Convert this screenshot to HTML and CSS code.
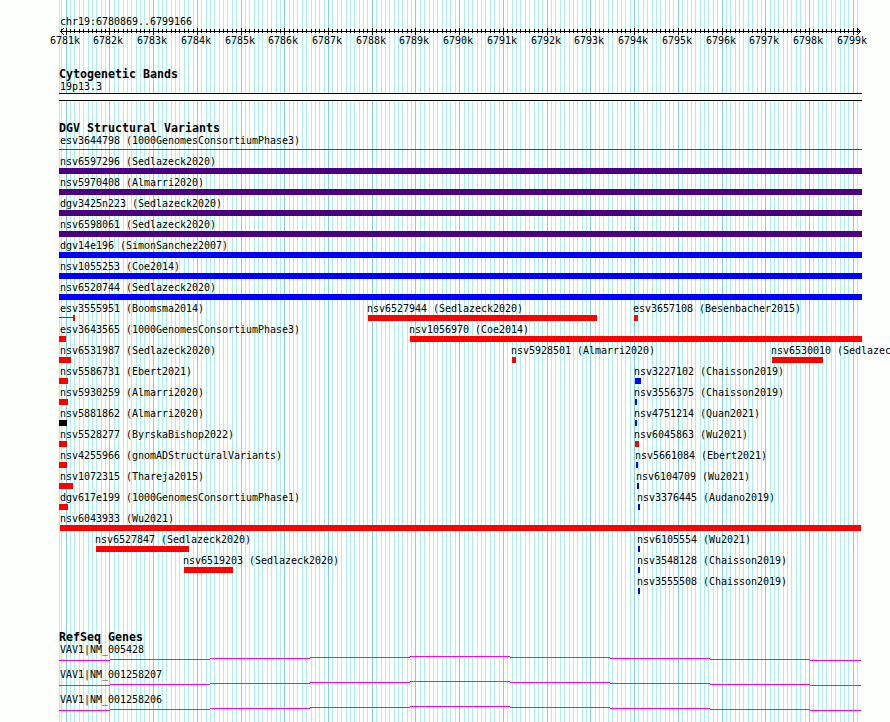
FILE: index.html
```
<!DOCTYPE html>
<html lang="en">
  <head>
    <meta charset="UTF-8" />
    <meta name="viewport" content="width=device-width, initial-scale=1.0" />
    <title>chr19:6780869..6799166</title>
    <link rel="stylesheet" href="styles.css">
  </head>
  <body>
    <div id="browser">
      <svg id="gridlines" width="890" height="722" shape-rendering="crispEdges"></svg>

      <div id="tracks">
        <div class="ruler">
          <div class="label">chr19:6780869..6799166</div>
          <svg id="scale" width="804" height="7"></svg>
          <div id="scale-labels"></div>
        </div>

        <div class="track cytoband">
          <h2>Cytogenetic Bands</h2>
          <div class="label">19p13.3</div>
          <div class="band"></div>
        </div>

        <div class="track">
          <h2>DGV Structural Variants</h2>
          <div id="variants"></div>
        </div>

        <div class="track genes">
          <h2>RefSeq Genes</h2>
          <div id="genes"></div>
        </div>
      </div>
    </div>
    <script src="script.js"></script>
  </body>
</html>
```

FILE: styles.css
```
body
{
  margin: 0;
  background-color: #fdfffc;
  color: #000;
  font-family: "DejaVu Sans Mono", monospace;
  font-size: 10px;
}
#browser
{
  position: relative;
  width: 890px;
  height: 722px;
  overflow: hidden;
}
#gridlines
{
  position: absolute;
  top: 0;
  left: 0;
}
#tracks
{
  position: relative;
  padding: 16px 0 0 59px;
}
svg
{
  display: block;
}
h2
{
  margin: 0;
  height: 13px;
  line-height: 13px;
  font-size: 11.63px;
  font-weight: bold;
  white-space: pre;
}
.label
{
  height: 12px;
  line-height: 12px;
  letter-spacing: -0.02px;
  margin-left: 1px;
  white-space: pre;
}
.ruler
{
  height: 52px;
}
#scale-labels
{
  display: grid;
}
#scale-labels .label
{
  grid-area: 1 / 1;
}
.cytoband
{
  margin-bottom: 21px;
}
.band
{
  width: 803px;
  height: 6px;
  border-top: 1px solid #000;
  border-bottom: 1px solid #000;
  background-color: #fdfffc;
}
.row
{
  display: grid;
  height: 21px;
}
.feature
{
  grid-area: 1 / 1;
}
.bar
{
  height: 6px;
}
.red
{
  background-color: #f00;
}
.blue
{
  background-color: #00f;
}
.indigo
{
  background-color: #4b0082;
}
.black
{
  background-color: #000;
}
/* thin line, optional block at the right end */
.line
{
  display: flex;
  justify-content: flex-end;
  background: linear-gradient(#f00, #f00) 0 2px / 100% 1px no-repeat;
}
.line span
{
  width: 2px;
  height: 6px;
  background-color: #f00;
}
.genes
{
  margin-top: 34px;
}
.gene
{
  height: 25px;
}
```

FILE: script.js
```
const SVG = "http://www.w3.org/2000/svg";
const START = 6780869;
const END = 6799166;
const LEFT = 59;
const SCALE = 800 / (END - START + 1);

// [name, start x, end x, colour, line style]
const rows = [
  [["esv3644798 (1000GenomesConsortiumPhase3)", 59, 862, "line"]],
  [["nsv6597296 (Sedlazeck2020)", 59, 862, "indigo"]],
  [["nsv5970408 (Almarri2020)", 59, 862, "indigo"]],
  [["dgv3425n223 (Sedlazeck2020)", 59, 862, "indigo"]],
  [["nsv6598061 (Sedlazeck2020)", 59, 862, "indigo"]],
  [["dgv14e196 (SimonSanchez2007)", 59, 862, "blue"]],
  [["nsv1055253 (Coe2014)", 59, 862, "blue"]],
  [["nsv6520744 (Sedlazeck2020)", 59, 862, "blue"]],
  [
    ["esv3555951 (Boomsma2014)", 59, 75, "line", true],
    ["nsv6527944 (Sedlazeck2020)", 368, 597, "red"],
    ["esv3657108 (Besenbacher2015)", 634, 638, "red"],
  ],
  [
    ["esv3643565 (1000GenomesConsortiumPhase3)", 59, 66, "red"],
    ["nsv1056970 (Coe2014)", 410, 862, "red"],
  ],
  [
    ["nsv6531987 (Sedlazeck2020)", 59, 71, "red"],
    ["nsv5928501 (Almarri2020)", 512, 516, "red"],
    ["nsv6530010 (Sedlazeck2020)", 772, 823, "red"],
  ],
  [
    ["nsv5586731 (Ebert2021)", 59, 68, "red"],
    ["nsv3227102 (Chaisson2019)", 635, 641, "blue"],
  ],
  [
    ["nsv5930259 (Almarri2020)", 59, 68, "red"],
    ["nsv3556375 (Chaisson2019)", 635, 637, "blue"],
  ],
  [
    ["nsv5881862 (Almarri2020)", 59, 67, "black"],
    ["nsv4751214 (Quan2021)", 635, 637, "blue"],
  ],
  [
    ["nsv5528277 (ByrskaBishop2022)", 59, 67, "red"],
    ["nsv6045863 (Wu2021)", 635, 639, "red"],
  ],
  [
    ["nsv4255966 (gnomADStructuralVariants)", 59, 67, "red"],
    ["nsv5661084 (Ebert2021)", 636, 638, "blue"],
  ],
  [
    ["nsv1072315 (Thareja2015)", 59, 73, "red"],
    ["nsv6104709 (Wu2021)", 637, 639, "blue"],
  ],
  [
    ["dgv617e199 (1000GenomesConsortiumPhase1)", 59, 68, "red"],
    ["nsv3376445 (Audano2019)", 638, 640, "blue"],
  ],
  [["nsv6043933 (Wu2021)", 60, 861, "red"]],
  [
    ["nsv6527847 (Sedlazeck2020)", 96, 189, "red"],
    ["nsv6105554 (Wu2021)", 638, 640, "blue"],
  ],
  [
    ["nsv6519203 (Sedlazeck2020)", 184, 233, "red"],
    ["nsv3548128 (Chaisson2019)", 638, 640, "blue"],
  ],
  [["nsv3555508 (Chaisson2019)", 638, 640, "blue"]],
];

const genes = ["VAV1|NM_005428", "VAV1|NM_001258207", "VAV1|NM_001258206"];

const toX = (pos) => Math.round(60 + (pos - START) * SCALE);

const addRect = (svg, x, y, w, h, fill) => {
  const rect = document.createElementNS(SVG, "rect");
  rect.setAttribute("x", x);
  rect.setAttribute("y", y);
  rect.setAttribute("width", w);
  rect.setAttribute("height", h);
  rect.setAttribute("fill", fill);
  svg.appendChild(rect);
};

const addDiv = (parent, className, text) => {
  const div = document.createElement("div");
  div.className = className;
  if (text) div.textContent = text;
  parent.appendChild(div);
  return div;
};

// gridlines and ruler ticks, one every 100 bp
const grid = document.getElementById("gridlines");
const scale = document.getElementById("scale");
const scaleLabels = document.getElementById("scale-labels");

addRect(grid, LEFT, 0, 1, 722, "#afeeee");
addRect(scale, 1, 3, 801, 1, "#000");
for (let pos = 6780900; pos <= END; pos += 100) {
  const x = toX(pos);
  const major = pos % 1000 === 0;
  addRect(grid, x, 0, 1, 722, major ? "#87ceeb" : "#afeeee");
  addRect(scale, x - LEFT, major ? 0 : 1, 1, major ? 7 : 4, "#000");
  if (major) {
    const label = addDiv(scaleLabels, "label", pos / 1000 + "k");
    label.style.marginLeft = x - LEFT - 16 + "px";
  }
}
// arrow heads
for (let i = 1; i <= 3; i++) {
  addRect(scale, 1 + i, 3 - i, 1, 1, "#000");
  addRect(scale, 1 + i, 3 + i, 1, 1, "#000");
  addRect(scale, 801 - i, 3 - i, 1, 1, "#000");
  addRect(scale, 801 - i, 3 + i, 1, 1, "#000");
}

// structural variants
const variants = document.getElementById("variants");
rows.forEach((features) => {
  const row = addDiv(variants, "row");
  features.forEach(([name, start, end, type, block]) => {
    const feature = addDiv(row, "feature");
    const label = addDiv(feature, "label", name);
    label.style.marginLeft = Math.max(1, start - LEFT - 1) + "px";
    const bar = addDiv(feature, "bar " + type);
    bar.style.marginLeft = start - LEFT + "px";
    bar.style.width = end - start + "px";
    if (block) bar.appendChild(document.createElement("span"));
  });
});

// genes, the intron line steps up to the middle and back down
const geneList = document.getElementById("genes");
const steps = [59, 110, 210, 310, 410, 510, 610, 710, 810, 861];
genes.forEach((name) => {
  const gene = addDiv(geneList, "gene");
  addDiv(gene, "label", name);
  const svg = document.createElementNS(SVG, "svg");
  svg.setAttribute("width", 803);
  svg.setAttribute("height", 5);
  for (let i = 0; i < steps.length - 1; i++) {
    addRect(svg, steps[i] - LEFT, Math.abs(4 - i), steps[i + 1] - steps[i], 1, "#f0f");
  }
  gene.appendChild(svg);
});
```
